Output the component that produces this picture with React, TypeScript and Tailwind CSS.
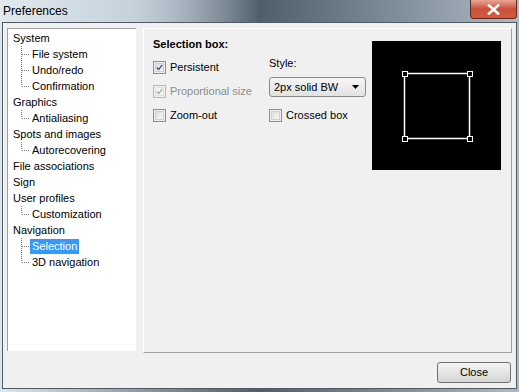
import React from 'react';

type Node = { label: string; level: 0 | 1; last?: boolean; selected?: boolean };

const tree: Node[] = [
  { label: 'System', level: 0 },
  { label: 'File system', level: 1 },
  { label: 'Undo/redo', level: 1 },
  { label: 'Confirmation', level: 1, last: true },
  { label: 'Graphics', level: 0 },
  { label: 'Antialiasing', level: 1, last: true },
  { label: 'Spots and images', level: 0 },
  { label: 'Autorecovering', level: 1, last: true },
  { label: 'File associations', level: 0 },
  { label: 'Sign', level: 0 },
  { label: 'User profiles', level: 0 },
  { label: 'Customization', level: 1, last: true },
  { label: 'Navigation', level: 0 },
  { label: 'Selection', level: 1, selected: true },
  { label: '3D navigation', level: 1, last: true },
];

const Connector: React.FC<{ last?: boolean }> = ({ last }) => (
  <svg width="22" height="16" viewBox="0 0 22 16" className="shrink-0">
    <line x1="13.5" y1="0" x2="13.5" y2={last ? 8 : 16} stroke="#808080" strokeDasharray="1 1" />
    <line x1="14" y1="8.5" x2="22" y2="8.5" stroke="#808080" strokeDasharray="1 1" />
  </svg>
);

const Checkbox: React.FC<{ checked?: boolean; disabled?: boolean }> = ({ checked, disabled }) => (
  <div
    className={`w-[13px] h-[13px] shrink-0 border p-[1px] ${
      disabled ? 'border-[#b8b8b8]' : 'border-[#8e8f8f]'
    }`}
  >
    <div
      className={`w-full h-full border flex items-center justify-center ${
        disabled
          ? 'border-[#e0e0e0] bg-[#f4f4f4]'
          : 'border-[#cfcfcf] bg-gradient-to-br from-[#dcdcdc] to-[#f8f8f8]'
      }`}
    >
      {checked && (
        <svg width="9" height="9" viewBox="0 0 9 9">
          <path
            d="M1 4.5 L3.5 7 L8 1"
            fill="none"
            stroke={disabled ? '#a8a8a8' : '#3a5396'}
            strokeWidth="1.6"
          />
        </svg>
      )}
    </div>
  </div>
);

const App: React.FC = () => {
  return (
    <div
      className="w-[519px] h-[392px] flex flex-col overflow-hidden bg-gradient-to-r from-[#dfe7ee] via-[#4f5e6a] to-[#aebbc6] text-[11px] text-black"
      style={{ fontFamily: '"Liberation Sans", Arial, sans-serif' }}
    >
      {/* Title bar */}
      <div className="h-[22px] shrink-0 flex items-start relative">
        <div className="absolute inset-0 bg-gradient-to-r from-[#e2e9ef] via-[#c6d2dc] to-transparent w-[260px]" />
        <span className="relative pl-[3px] pt-[2px] text-[12px] text-black">Preferences</span>
        <div className="ml-auto mr-[2px] w-[47px] h-[19px] rounded-b-[4px] border border-t-0 border-[#5b2a20] bg-gradient-to-b from-[#e8a595] via-[#c9503a] to-[#d65a3c] flex items-center justify-center relative">
          <svg width="13" height="11" viewBox="0 0 13 11">
            <path d="M2 1.5 L11 9.5 M11 1.5 L2 9.5" stroke="#ffffff" strokeWidth="2.6" strokeLinecap="square" />
          </svg>
        </div>
      </div>

      {/* Client area */}
      <div className="flex-1 mx-[2px] mb-[3px] border border-[#4e5a64] bg-[#f0f0f0] flex flex-col">
        <div className="flex pt-[5px] pl-[4px] pr-[3px]">
          {/* Tree */}
          <div className="w-[129px] h-[323px] bg-white border-t border-l border-[#a0a0a0] pt-[1px]">
            {tree.map((n) => (
              <div key={n.label} className="h-4 flex items-center">
                {n.level === 0 ? (
                  <span className="pl-[5px] leading-4">{n.label}</span>
                ) : (
                  <>
                    <Connector last={n.last} />
                    <span
                      className={`leading-[15px] px-[2px] ${
                        n.selected ? 'bg-[#3399ff] text-white' : ''
                      }`}
                    >
                      {n.label}
                    </span>
                  </>
                )}
              </div>
            ))}
          </div>

          {/* Right panel */}
          <div className="ml-[7px] w-[369px] h-[325px] border-t border-l border-white border-r border-b border-r-[#a0a0a0] border-b-[#a0a0a0] flex pt-[7px] pl-[9px] pr-[10px]">
            <div className="flex flex-col">
              <div className="h-4 flex items-center font-bold">Selection box:</div>
              <div className="flex">
                <div className="w-[116px] flex flex-col pt-[3px]">
                  <div className="h-6 flex items-center gap-[4px]">
                    <Checkbox checked />
                    <span>Persistent</span>
                  </div>
                  <div className="h-6 flex items-center gap-[4px] text-[#8d8d8d]">
                    <Checkbox checked disabled />
                    <span>Proportional size</span>
                  </div>
                  <div className="h-6 flex items-center gap-[4px]">
                    <Checkbox />
                    <span>Zoom-out</span>
                  </div>
                </div>
                <div className="flex flex-col">
                  <div className="h-4 mt-[3px] flex items-center">Style:</div>
                  <div className="mt-[6px] w-[97px] h-[20px] rounded-[3px] border border-[#8a8a8a] bg-gradient-to-b from-[#f6f6f6] to-[#e2e2e2] flex items-center pl-[4px] pr-[6px]">
                    <span>2px solid BW</span>
                    <svg width="7" height="4" viewBox="0 0 7 4" className="ml-auto">
                      <path d="M0 0 L7 0 L3.5 4 Z" fill="#000" />
                    </svg>
                  </div>
                  <div className="mt-[6px] h-6 flex items-center gap-[4px]">
                    <Checkbox />
                    <span>Crossed box</span>
                  </div>
                </div>
              </div>
            </div>

            {/* Preview */}
            <div className="ml-auto mt-[5px] w-[129px] h-[129px] bg-black flex items-center justify-center">
              <svg width="72" height="72" viewBox="0 0 72 72">
                <rect x="3.5" y="3.5" width="65" height="65" fill="none" stroke="#fff" strokeWidth="1.5" />
                {[
                  [1, 1],
                  [66, 1],
                  [1, 66],
                  [66, 66],
                ].map(([x, y]) => (
                  <rect key={`${x}-${y}`} x={x + 0.5} y={y + 0.5} width="5" height="5" fill="#000" stroke="#fff" />
                ))}
              </svg>
            </div>
          </div>
        </div>

        {/* Footer */}
        <div className="flex justify-end pr-[5px] mt-[9px]">
          <button className="w-[74px] h-[21px] rounded-[3px] border border-[#707070] bg-gradient-to-b from-[#f2f2f2] via-[#e6e6e6] to-[#d4d4d4] text-[11px] text-black">
            Close
          </button>
        </div>
      </div>
    </div>
  );
};

export default App;
